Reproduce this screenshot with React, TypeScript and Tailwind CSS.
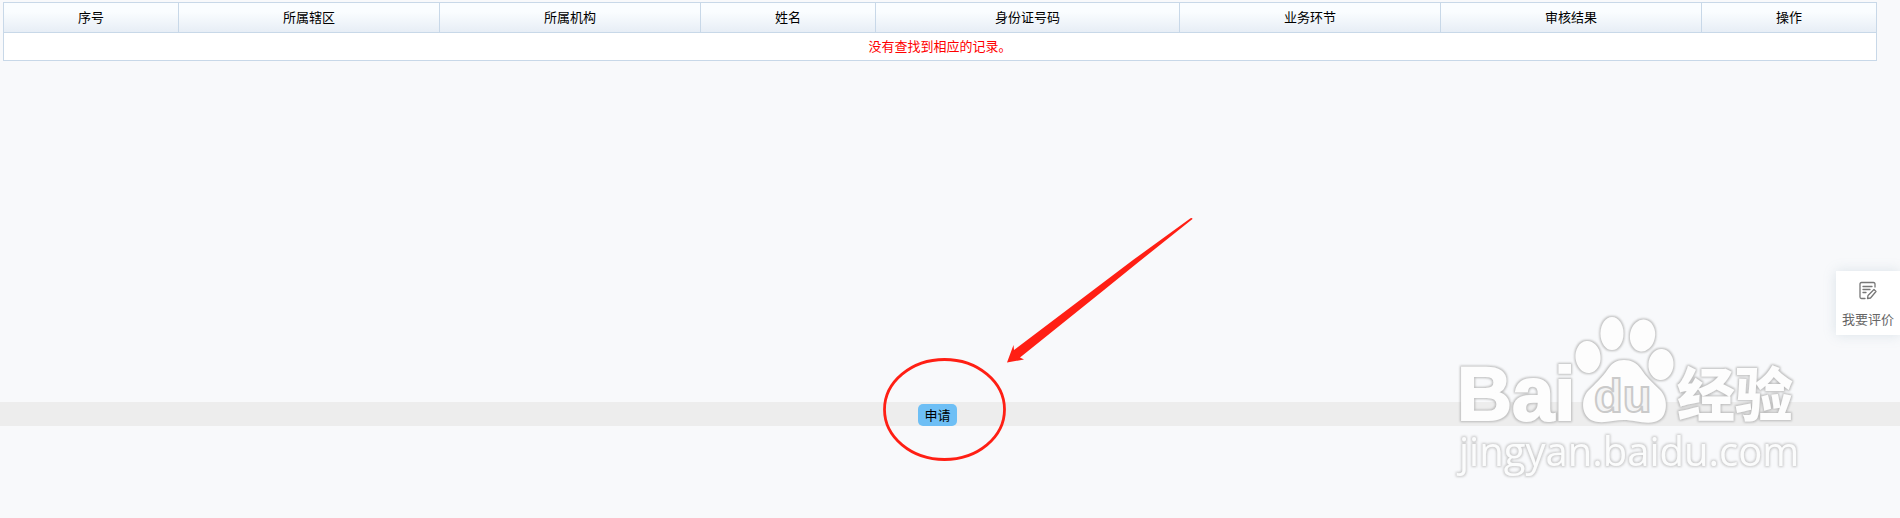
const columns = [
  { title: '序号', width: 'w-[9.34%]' },
  { title: '所属辖区', width: 'w-[13.94%]' },
  { title: '所属机构', width: 'w-[13.94%]' },
  { title: '姓名', width: 'w-[9.34%]' },
  { title: '身份证号码', width: 'w-[16.22%]' },
  { title: '业务环节', width: 'w-[13.94%]' },
  { title: '审核结果', width: 'w-[13.94%]' },
  { title: '操作', width: 'w-[9.34%]' },
];

const RecordTable = () => (
  <table className="w-full table-fixed border-collapse border border-[#c8d8e8] bg-white text-center text-[13px] leading-5">
    <thead className="bg-linear-to-b from-[#fafdff] from-30% to-[#e6edf5]">
      <tr className="h-[30px]">
        {columns.map(col => (
          <th key={col.title} scope="col" className={`border border-[#c8d8e8] pb-0.5 font-normal ${col.width}`}>
            {col.title}
          </th>
        ))}
      </tr>
    </thead>
    <tbody>
      <tr className="h-7">
        <td colSpan={columns.length} className="pb-0.5 text-[#ff0000]">没有查找到相应的记录。</td>
      </tr>
    </tbody>
  </table>
);

// Red ellipse round the apply button, with the arrow pointing at it
const Highlight = () => (
  <svg
    className="pointer-events-none absolute -left-[38px] -top-[194px] h-[260px] w-[320px] max-w-none"
    viewBox="880 210 320 260"
    aria-hidden="true"
  >
    <ellipse cx="944.5" cy="409.5" rx="60" ry="50" fill="none" stroke="#ff1f14" strokeWidth="2.8" />
    <path d="M1192 218 L1190.500 218.300 L1133 260 L1014 350 L1013.500 345 L1007 362.500 L1024 359.500 L1020 357.500 L1104 290 L1138 262.500 L1192.500 219 Z" fill="#ff1f14" />
  </svg>
);

const Watermark = () => (
  <svg
    className="pointer-events-none absolute right-[90px] top-[305px] h-[180px] w-[360px]"
    viewBox="1450 305 360 180"
    role="img"
    aria-label="Baidu 经验"
  >
    <defs>
      <filter id="edge" x="-10%" y="-10%" width="120%" height="120%">
        <feMorphology in="SourceAlpha" operator="dilate" radius="1" result="grown" />
        <feGaussianBlur in="grown" stdDeviation="0.9" result="soft" />
        <feFlood floodColor="#b4b4b4" floodOpacity="0.9" />
        <feComposite in2="soft" operator="in" />
        <feMerge>
          <feMergeNode />
          <feMergeNode in="SourceGraphic" />
        </feMerge>
      </filter>
    </defs>
    <g fill="#fdfdfd" filter="url(#edge)">
      <text x="1457" y="420" fontSize="76" fontWeight="700" stroke="#fdfdfd" strokeWidth="2" className="font-['Liberation_Sans',sans-serif]">Bai</text>
      <ellipse cx="1588" cy="357" rx="12.500" ry="16" transform="rotate(-6 1588 357)" />
      <ellipse cx="1612" cy="333.500" rx="11.500" ry="16.500" />
      <ellipse cx="1642.500" cy="335.500" rx="12.500" ry="16" transform="rotate(10 1642.500 335.500)" />
      <ellipse cx="1661" cy="364.500" rx="12.500" ry="15.500" transform="rotate(4 1661 364.500)" />
      <path d="M1624 360 C1631 360 1637 363 1641 369 C1646 377 1653 383 1660 390 C1669 399 1667 416 1659 420 C1650 426 1634 420 1624 420 C1613 420 1601 425 1591 420 C1581 414 1581 399 1588 391 C1595 384 1602 378 1608 369 C1612 363 1617 360 1624 360 Z" />
      <text x="1677" y="416" fontSize="58" fontWeight="900" className="font-['Noto_Sans_CJK_SC',sans-serif]">经验</text>
    </g>
    <text x="1594" y="412" fontSize="47" fill="#f4f4f4" stroke="#cacaca" strokeWidth="2" fontWeight="700" className="font-['Liberation_Sans',sans-serif]">du</text>
    <g fill="#fdfdfd" filter="url(#edge)" opacity="0.75">
      <text x="1459" y="466" fontSize="40" className="font-['Open_Sans',sans-serif]">jingyan.baidu.com</text>
    </g>
  </svg>
);

const FeedbackButton = () => (
  <button
    type="button"
    className="absolute right-0 top-[271px] flex size-16 cursor-pointer flex-col items-center justify-center gap-2 bg-white text-[13px] leading-5 text-[#666] shadow-[0_0_12px_rgba(120,150,170,0.22)]"
  >
    <svg className="mt-1 size-5" viewBox="0 0 20 20" fill="none" stroke="#777" strokeWidth="1.3" strokeLinecap="round" strokeLinejoin="round" aria-hidden="true">
      <path d="M17 6 V3 Q17 1.500 15.500 1.500 H3.500 Q2 1.500 2 3 V16 Q2 17.500 3.500 17.500 H7" />
      <path d="M5 5.500 H14 M5 8.500 H12 M5 11.500 H8" />
      <path d="M16 8.500 L18 10.500 L12.500 17 L9.500 17.500 L10 14.500 Z" />
    </svg>
    <span className="whitespace-nowrap">我要评价</span>
  </button>
);

export default function App() {
  return (
    <div className="relative min-h-screen overflow-hidden bg-[#f8f9fb] font-['Noto_Sans_CJK_SC',sans-serif] text-black">
      <main className="min-h-[402px] pl-[3px] pr-[23px] pt-0.5">
        <RecordTable />
      </main>
      <div className="flex h-6 items-end justify-center bg-[#ededed] pr-[25px]">
        <div className="relative h-[22px]">
          <button type="button" className="block h-[22px] w-[39px] cursor-pointer rounded-[5px] bg-[#6ebff5] text-[13px] leading-5">
            申请
          </button>
          <Highlight />
        </div>
      </div>
      <Watermark />
      <FeedbackButton />
    </div>
  );
}
